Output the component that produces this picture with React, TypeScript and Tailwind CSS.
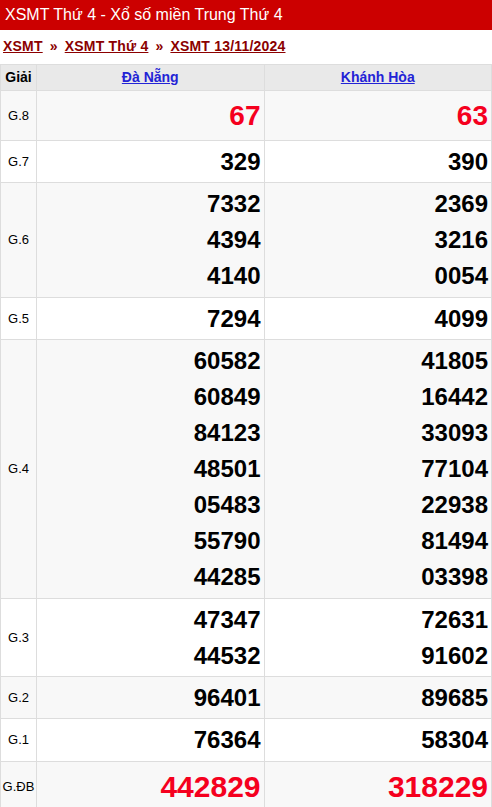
const rows: { label: string; dn: string[]; kh: string[]; kind?: 'g8' | 'db'; tall?: boolean }[] = [
    { label: 'G.8', dn: ['67'], kh: ['63'], kind: 'g8' },
    { label: 'G.7', dn: ['329'], kh: ['390'] },
    { label: 'G.6', dn: ['7332', '4394', '4140'], kh: ['2369', '3216', '0054'], tall: true },
    { label: 'G.5', dn: ['7294'], kh: ['4099'] },
    {
        label: 'G.4',
        dn: ['60582', '60849', '84123', '48501', '05483', '55790', '44285'],
        kh: ['41805', '16442', '33093', '77104', '22938', '81494', '03398'],
        tall: true,
    },
    { label: 'G.3', dn: ['47347', '44532'], kh: ['72631', '91602'] },
    { label: 'G.2', dn: ['96401'], kh: ['89685'] },
    { label: 'G.1', dn: ['76364'], kh: ['58304'], tall: true },
    { label: 'G.ĐB', dn: ['442829'], kh: ['318229'], kind: 'db' },
];

const numClass = (kind?: 'g8' | 'db') => {
    if (kind === 'g8') return 'text-[28px] leading-[44px] text-[#f5001e]';
    if (kind === 'db') return 'text-[30px] leading-[44px] text-[#f5001e]';
    return 'text-[24px] leading-[36px] text-black';
};

const Cell = ({ nums, kind, tall }: { nums: string[]; kind?: 'g8' | 'db'; tall?: boolean }) => (
    <td className={`border border-[#dddddd] pt-[3px] pr-[3px] text-right align-middle ${tall ? 'pb-[3px]' : 'pb-[2px]'}`}>
        {nums.map((n) => (
            <div key={n} className={`font-bold ${numClass(kind)}`}>{n}</div>
        ))}
    </td>
);

const App = () => {
    return (
        <div className="w-[492px] h-[807px] overflow-hidden bg-white font-['Liberation_Sans',Arial,sans-serif]">
            <div className="h-[30px] bg-[#cc0000] px-[5px] text-[16px] leading-[30px] text-white">
                XSMT Thứ 4 - Xổ số miền Trung Thứ 4
            </div>
            <div className="h-[34px] flex items-center gap-[7px] px-[3px] pb-[2px] text-[14px] font-bold tracking-[0.2px] text-[#8b0000]">
                <a className="underline">XSMT</a>
                <span>»</span>
                <a className="underline">XSMT Thứ 4</a>
                <span>»</span>
                <a className="underline">XSMT 13/11/2024</a>
            </div>
            <table className="w-full table-fixed border-collapse">
                <colgroup>
                    <col className="w-[36px]" />
                    <col />
                    <col />
                </colgroup>
                <thead>
                    <tr className="h-[26px] bg-[#e9e9e9] text-[14px] font-bold">
                        <th className="border border-[#dddddd] text-center">Giải</th>
                        <th className="border border-[#dddddd] text-center"><a className="underline text-[#2323d6]">Đà Nẵng</a></th>
                        <th className="border border-[#dddddd] text-center"><a className="underline text-[#2323d6]">Khánh Hòa</a></th>
                    </tr>
                </thead>
                <tbody>
                    {rows.map((r, i) => (
                        <tr key={r.label} className={i % 2 === 0 ? 'bg-[#f8f8f8]' : 'bg-white'}>
                            <td className="border border-[#dddddd] text-center align-middle text-[13px] whitespace-nowrap text-black">{r.label}</td>
                            <Cell nums={r.dn} kind={r.kind} tall={r.tall} />
                            <Cell nums={r.kh} kind={r.kind} tall={r.tall} />
                        </tr>
                    ))}
                </tbody>
            </table>
        </div>
    );
};

export default App;
